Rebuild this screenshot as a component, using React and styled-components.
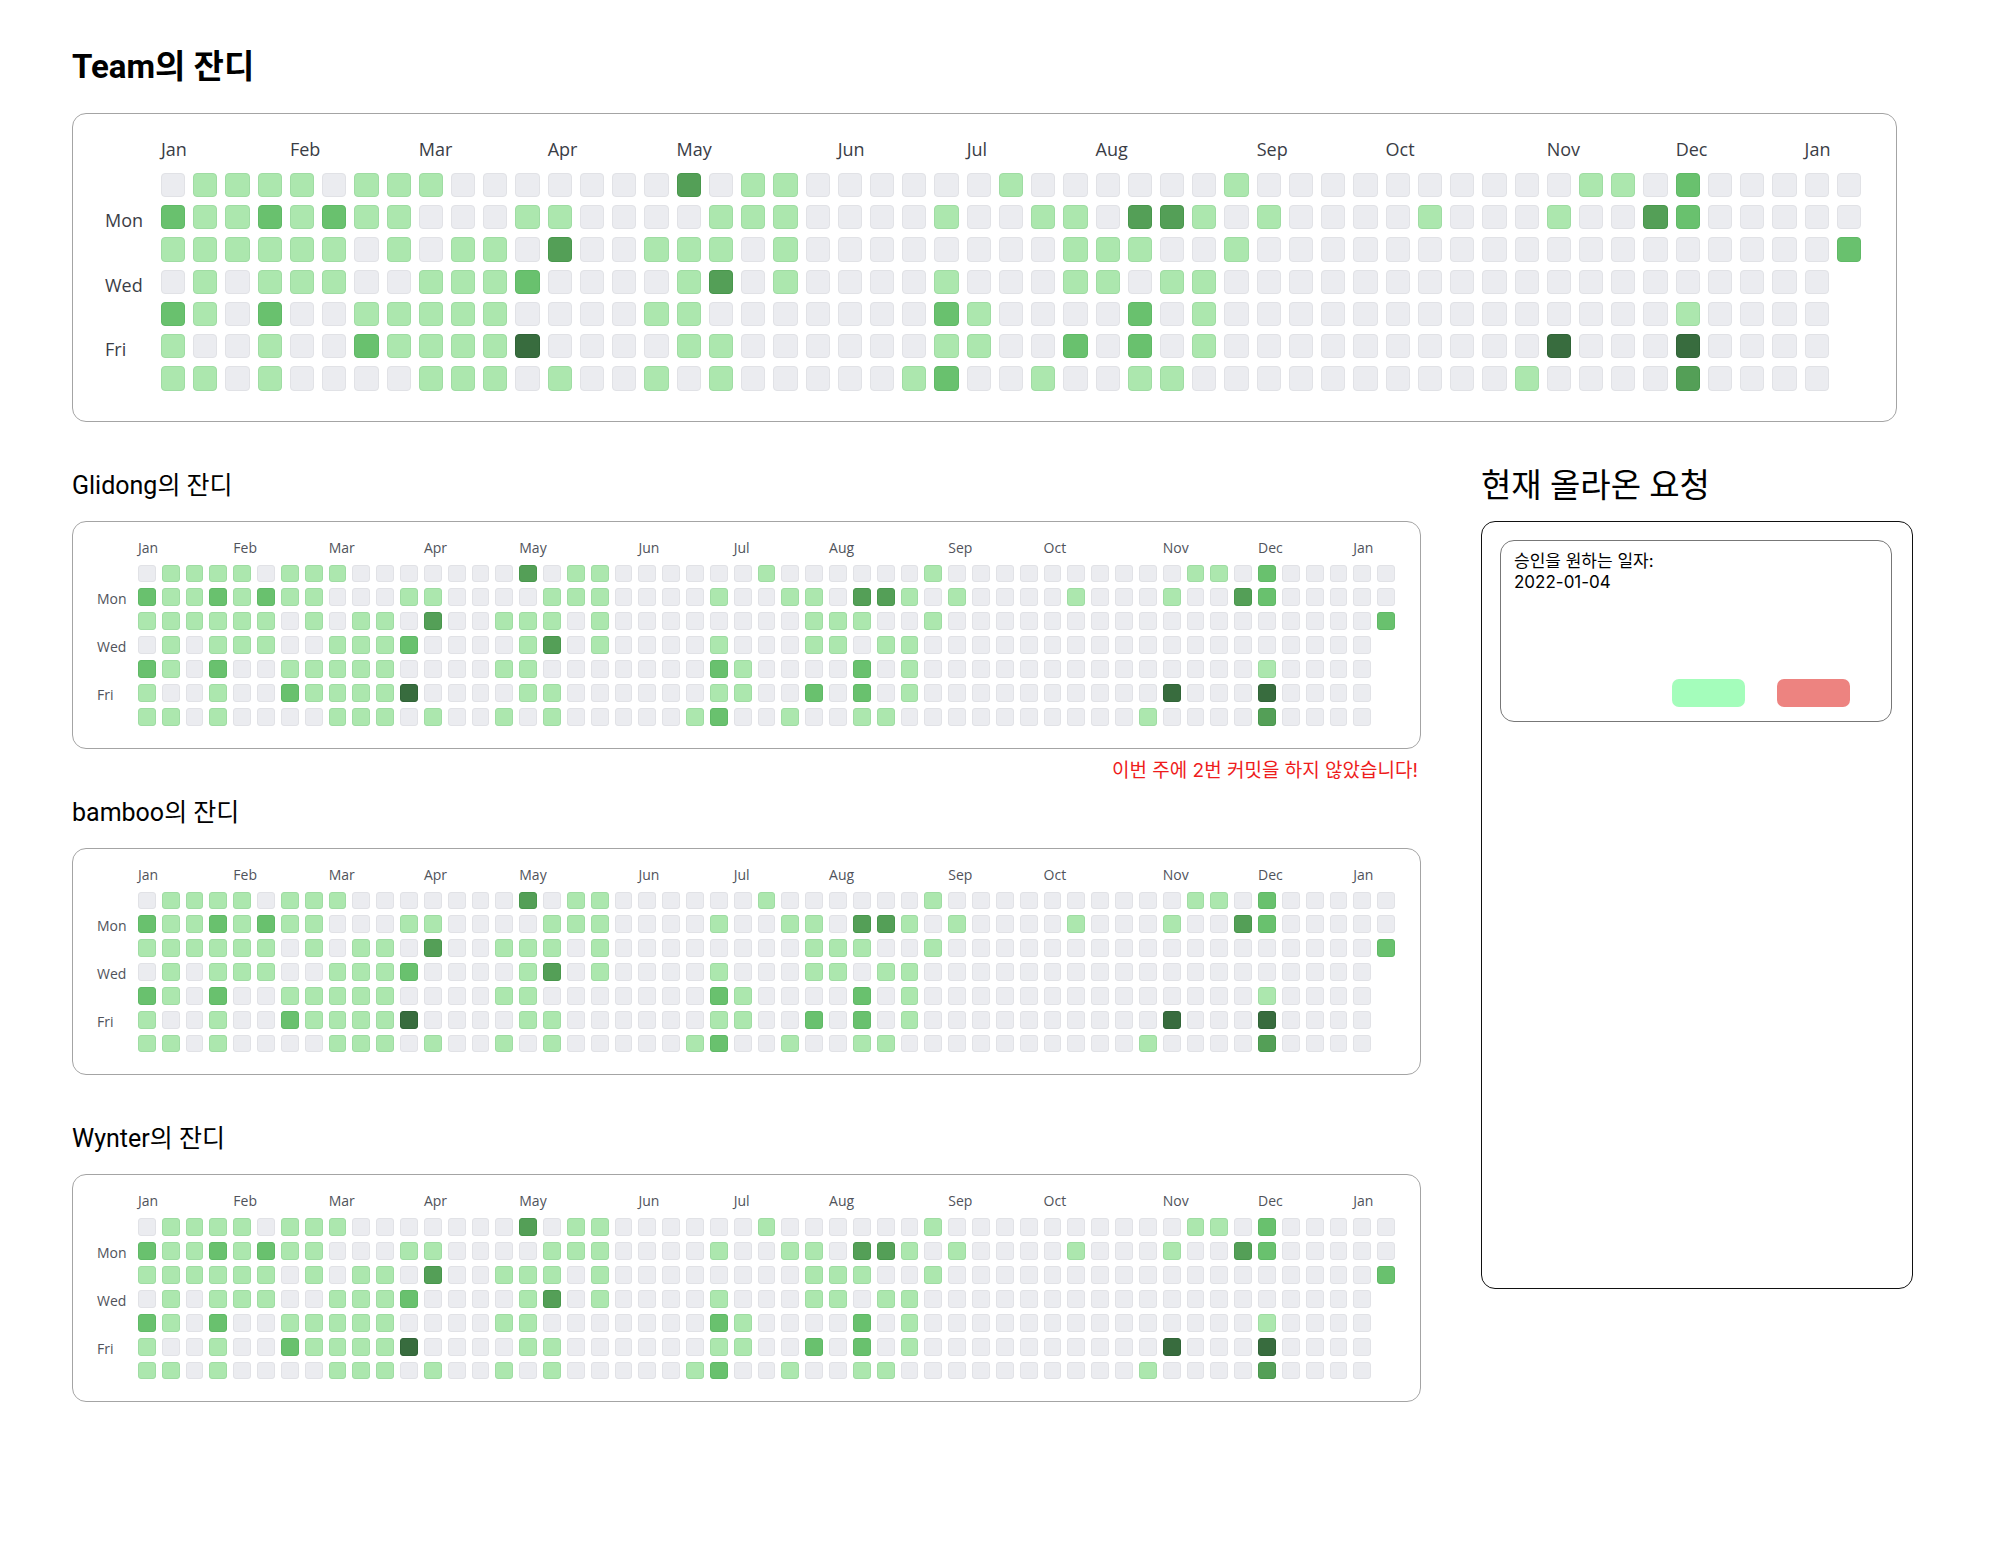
import React from "react";
import styled, { createGlobalStyle, css } from "styled-components";

const LEVELS = ["#ebecf0", "#ace7ae", "#69c16e", "#549f57", "#386c3e"];
const EDGES = ["#e1e2e6", "#9fdca3", "#5fb966", "#48974c", "#306437"];

const WEEKS = 53;
const LAST_DAY = 2;

const MONTHS = [
  ["Jan", 0],
  ["Feb", 4],
  ["Mar", 8],
  ["Apr", 12],
  ["May", 16],
  ["Jun", 21],
  ["Jul", 25],
  ["Aug", 29],
  ["Sep", 34],
  ["Oct", 38],
  ["Nov", 43],
  ["Dec", 47],
  ["Jan", 51],
];

const DAYS = [
  ["Mon", 1],
  ["Wed", 3],
  ["Fri", 5],
];

// One entry per weekday (Sunday first): activity level -> week indexes.
const ACTIVITY = [
  { 1: [1, 2, 3, 4, 6, 7, 8, 18, 19, 26, 33, 44, 45], 2: [47], 3: [16] },
  {
    1: [1, 2, 4, 6, 7, 11, 12, 17, 18, 19, 24, 27, 28, 32, 34, 39, 43],
    2: [0, 3, 5, 47],
    3: [30, 31, 46],
  },
  {
    1: [0, 1, 2, 3, 4, 5, 7, 9, 10, 15, 16, 17, 19, 28, 29, 30, 33],
    2: [52],
    3: [12],
  },
  { 1: [1, 3, 4, 5, 8, 9, 10, 16, 19, 24, 28, 29, 31, 32], 2: [11], 3: [17] },
  { 1: [1, 6, 7, 8, 9, 10, 15, 16, 25, 32, 47], 2: [0, 3, 24, 30] },
  {
    1: [0, 3, 7, 8, 9, 10, 16, 17, 24, 25, 32],
    2: [6, 28, 30],
    4: [11, 43, 47],
  },
  {
    1: [0, 1, 3, 8, 9, 10, 12, 15, 17, 23, 27, 30, 31, 42],
    2: [24],
    3: [47],
  },
];

const CELLS = ACTIVITY.flatMap((levels, day) =>
  Array.from({ length: WEEKS }, (_, week) => {
    if (week === WEEKS - 1 && day > LAST_DAY) return null;
    const hit = Object.keys(levels).find((l) => levels[l].includes(week));
    return { day, week, level: hit ? Number(hit) : 0 };
  })
).filter(Boolean);

const MEMBERS = [
  { name: "Glidong", warning: "이번 주에 2번 커밋을 하지 않았습니다!" },
  { name: "bamboo" },
  { name: "Wynter" },
];

const GlobalStyle = createGlobalStyle`
  * { box-sizing: border-box; }
  body {
    margin: 0;
    background: #fff;
    color: #000;
    font-family: Roboto, "Noto Sans CJK KR", sans-serif;
  }
  h1, h2, p { margin: 0; }
`;

const Page = styled.main`
  padding: 47px 79px 48px 72px;
`;

const TeamSection = styled.section`
  padding-right: 16px;
  margin-bottom: 48px;
`;

const TeamTitle = styled.h1`
  margin-bottom: 26px;
  font-size: 33px;
  line-height: 40px;
  font-weight: 700;
`;

const Columns = styled.div`
  display: grid;
  grid-template-columns: minmax(0, 1fr) 432px;
  gap: 60px;
  align-items: start;
`;

const SectionTitle = styled.h2`
  margin-bottom: 19px;
  font-size: ${(p) => (p.$large ? 33 : 25)}px;
  line-height: 32px;
  font-weight: 400;
`;

const MemberFooter = styled.div`
  min-height: 48px;
  padding: 8px 3px 0;
  text-align: right;
`;

const Warning = styled.p`
  color: #ee1c1c;
  font-family: Inter, "Noto Sans CJK KR", sans-serif;
  font-size: 19px;
  line-height: 28px;
`;

const large = css`
  --gap: 8px;
  --cell-radius: 4px;
  --day-line: 30px;
  padding: 23px 35px 30px 32px;
  grid-template-columns: 56px minmax(0, 1fr);
  row-gap: 12px;
  font-size: 18px;
  line-height: 24px;
  color: #3a3d46;
`;

const small = css`
  --gap: 6px;
  --cell-radius: 3px;
  --day-line: 22px;
  padding: 16px 25px 22px 24px;
  grid-template-columns: 41px minmax(0, 1fr);
  row-gap: 7px;
  font-size: 14px;
  line-height: 20px;
  color: #50535b;
`;

const Card = styled.div`
  display: grid;
  border: 1px solid #a4a4a4;
  border-radius: 14px;
  font-family: "Open Sans", "Noto Sans", sans-serif;
  ${(p) => (p.$large ? large : small)}
`;

const Months = styled.div`
  grid-column: 2;
  display: grid;
  grid-template-columns: repeat(${WEEKS}, minmax(0, 1fr));
  column-gap: var(--gap);
`;

const Month = styled.span`
  grid-row: 1;
  grid-column: ${(p) => p.$week + 1} / span 2;
  white-space: nowrap;
`;

/* Size containment lets the cells alone decide the height of the rows. */
const Days = styled.div`
  contain: size;
  display: grid;
  grid-template-rows: repeat(7, minmax(0, 1fr));
  row-gap: var(--gap);
  line-height: var(--day-line);
`;

const Day = styled.span`
  grid-row: ${(p) => p.$day + 1};
`;

const Cells = styled.div`
  display: grid;
  grid-template-columns: repeat(${WEEKS}, minmax(0, 1fr));
  gap: var(--gap);
`;

const Cell = styled.span`
  grid-area: ${(p) => p.$day + 1} / ${(p) => p.$week + 1};
  aspect-ratio: 1;
  border: 1px solid ${(p) => EDGES[p.$level]};
  border-radius: var(--cell-radius);
  background: ${(p) => LEVELS[p.$level]};
`;

const RequestPanel = styled.div`
  min-height: 768px;
  padding: 18px 20px 18px 18px;
  border: 1px solid #111;
  border-radius: 14px;
`;

const RequestCard = styled.article`
  display: flex;
  flex-direction: column;
  justify-content: space-between;
  min-height: 182px;
  padding: 10px 41px 14px 13px;
  border: 1px solid #777;
  border-radius: 14px;
  font-family: Inter, "Noto Sans CJK KR", sans-serif;
  font-size: 17px;
  line-height: 21px;
`;

const RequestActions = styled.div`
  display: flex;
  justify-content: flex-end;
  gap: 32px;
`;

const ActionButton = styled.button`
  width: 73px;
  height: 28px;
  padding: 0;
  border: 0;
  border-radius: 7px;
  background: ${(p) => (p.$approve ? "#a4fdbb" : "#ed8380")};
  cursor: pointer;
`;

function Grass({ isLarge = false, label }) {
  return (
    <Card $large={isLarge} role="group" aria-label={label}>
      <Months>
        {MONTHS.map(([name, week]) => (
          <Month key={week} $week={week}>
            {name}
          </Month>
        ))}
      </Months>
      <Days>
        {DAYS.map(([name, day]) => (
          <Day key={name} $day={day}>
            {name}
          </Day>
        ))}
      </Days>
      <Cells>
        {CELLS.map(({ day, week, level }) => (
          <Cell key={`${day}-${week}`} $day={day} $week={week} $level={level} />
        ))}
      </Cells>
    </Card>
  );
}

export default function App() {
  return (
    <Page lang="ko">
      <GlobalStyle />
      <TeamSection>
        <TeamTitle>Team의 잔디</TeamTitle>
        <Grass isLarge label="Team의 잔디" />
      </TeamSection>
      <Columns>
        <div>
          {MEMBERS.map(({ name, warning }) => (
            <section key={name}>
              <SectionTitle>{name}의 잔디</SectionTitle>
              <Grass label={`${name}의 잔디`} />
              <MemberFooter>{warning && <Warning>{warning}</Warning>}</MemberFooter>
            </section>
          ))}
        </div>
        <aside>
          <SectionTitle $large>현재 올라온 요청</SectionTitle>
          <RequestPanel>
            <RequestCard>
              <p>
                승인을 원하는 일자:
                <br />
                <time dateTime="2022-01-04">2022-01-04</time>
              </p>
              <RequestActions>
                <ActionButton type="button" $approve aria-label="승인" />
                <ActionButton type="button" aria-label="거절" />
              </RequestActions>
            </RequestCard>
          </RequestPanel>
        </aside>
      </Columns>
    </Page>
  );
}
